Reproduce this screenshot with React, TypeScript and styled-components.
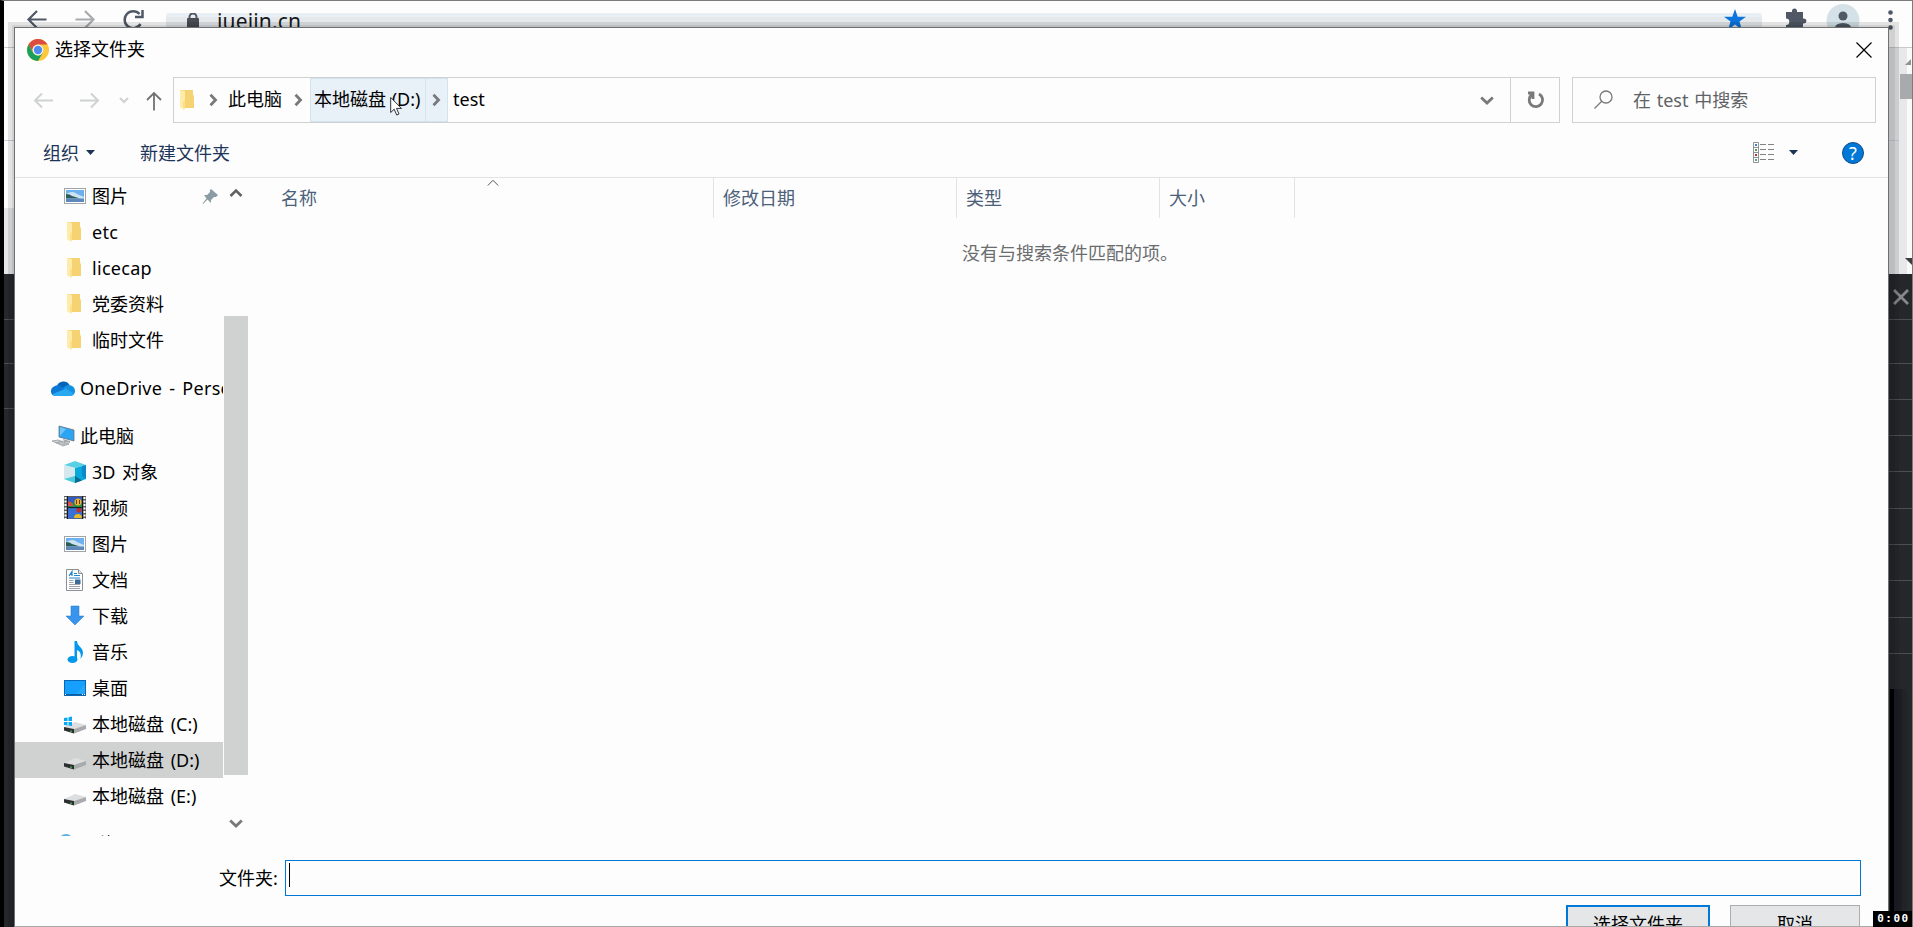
import React from 'react';
import styled, { createGlobalStyle, css } from 'styled-components';

const Global = createGlobalStyle`
  * { box-sizing: border-box; }
  html, body { margin: 0; padding: 0; overflow: hidden; background: #25272b; }
  body {
    font-family: "Noto Sans", "Noto Sans CJK SC", sans-serif; font-size: 18px; font-weight: 400;
    word-spacing: 1px; color: #000;
  }
  svg { flex: none; }
`;
const Screen = styled.div`
  position: relative; width: 1913px; height: 927px; overflow: hidden;
  border-top: 1px solid #7c7c7c; border-left: 4px solid #000; border-right: 1px solid #7c7c7c;
  display: flex; flex-direction: column;
`;
const BrowserBar = styled.div`
  height: 47px; flex: none; background: #fdfdfd; border-bottom: 1px solid #c8cacc;
  display: flex; align-items: flex-start; padding: 2px 0 0 20px;
`;
const NavIcon = styled.svg<{ $gap?: number }>`
  width: 26px; height: 32px; flex: none; margin-right: ${p => p.$gap ?? 22}px; overflow: visible;
`;
const UrlPill = styled.div`
  margin: 10px 0 0 -5px; width: 1596px; flex: none; height: 30px; border-radius: 3px 3px 0 0;
  background: linear-gradient(#e8f0f6 4px, #e6e9eb 4px);
  display: flex; align-items: flex-start; padding-left: 20px; color: #16181c;
`;
const Host = styled.span`margin-left: 17px; font-size: 21px; line-height: 16px; letter-spacing: .15px;`;
const BarEnd = styled.div`margin-left: -41px; display: flex;`;
const PageArea = styled.div`
  height: 226px; flex: none; background: #fdfdfd; display: flex; justify-content: space-between;
`;
const PageEdge = styled.div<{ $right?: boolean }>`
  width: ${p => (p.$right ? 24 : 10)}px; display: flex; flex-direction: column;
  background: ${p => (p.$right ? '#e4e6e8' : '#fdfdfd')};
`;
const PageBlock = styled.div<{ $h: number; $bg?: string; $line?: boolean }>`
  height: ${p => p.$h}px; flex: none; background: ${p => p.$bg ?? 'transparent'};
  border-bottom: ${p => (p.$line ? '1px solid #ccd2d8' : '0')};
`;
const PageScroll = styled.svg`position: absolute; right: 0; top: 47px; width: 13px; height: 226px;`;
const DevTools = styled.div`flex: 1; background: #25272b; display: flex; justify-content: space-between;`;
const Column = styled.div<{ $w: number }>`width: ${p => p.$w}px; display: flex; flex-direction: column;`;
const Row = styled.div<{ $h: number }>`
  height: ${p => p.$h}px; flex: none; border-bottom: 1px solid #4c4e50;
  display: flex; align-items: center; justify-content: center;
`;
const Console = styled.div`
  margin-top: 35px; flex: 1;
  background: linear-gradient(90deg, #25272b 1px, #000 1px 5px, #1c1c25 5px 13px, #222325 13px 18px, #25272b 18px);
`;

const Dialog = styled.section`
  position: absolute; left: 10px; top: 26px; width: 1875px; height: 900px; background: #fdfdfd;
  border: 1px solid #6e7072; border-bottom-color: #a8a8a8;
  box-shadow: 2px 2px 0 4px rgba(0,0,0,.08), 2px 3px 0 8px rgba(0,0,0,.1);
  display: flex; flex-direction: column; overflow: hidden;
`;
const TitleBar = styled.header`
  height: 49px; flex: none; display: flex; align-items: center; padding: 0 16px 6px 12px;
`;
const Title = styled.h1`margin: 0 auto 0 6px; padding-bottom: 2px; font-size: 18px; font-weight: inherit; line-height: 24px;`;
const NavRow = styled.div`height: 46px; flex: none; display: flex;`;
const Arrows = styled.svg`width: 158px; height: 46px; flex: none;`;
const Address = styled.div`
  width: 1387px; border: 1px solid #d0d2d2; display: flex; align-items: stretch; line-height: 40px;
`;
const FolderBox = styled.span`width: 32px; padding: 11px 0 0 3px; line-height: 0;`;
const Crumb = styled.span<{ $w: number; $hot?: boolean }>`
  width: ${p => p.$w}px; padding-left: ${p => (p.$hot ? 3 : 4)}px; white-space: nowrap; border: 1px solid transparent;
  ${p => p.$hot && css`background: #e8f0f8; border-color: #d4e4ec;`}
`;
const Chevron = styled.span<{ $w: number; $hot?: boolean }>`
  width: ${p => p.$w}px; display: flex; align-items: center; justify-content: center;
  border: 1px solid transparent; border-left: 0; padding-right: 2px;
  ${p => p.$hot && css`background: #e8f0f8; border-color: #d4e4ec;`}
`;
const DropButton = styled.span`
  margin-left: auto; width: 47px; display: flex; align-items: center; justify-content: center;
  border-right: 1px solid #d0d2d2;
`;
const Refresh = styled.span`width: 48px; display: flex; align-items: center; justify-content: center; padding-left: 1px;`;
const Search = styled.div`
  margin-left: 12px; width: 304px; border: 1px solid #d0d2d2; display: flex; align-items: center;
  padding: 0 0 2px 21px; gap: 20px; color: #606266;
`;
const ToolRow = styled.div`
  height: 55px; flex: none; border-bottom: 1px solid #e2e4e4; display: flex; align-items: center;
  padding: 4px 24px 0 28px; color: #1c3458;
`;
const Organize = styled.span`display: flex; align-items: center; gap: 7px;`;
const NewFolder = styled.span`margin-left: 45px; margin-right: auto;`;
const ViewMode = styled.span`display: flex; align-items: center; gap: 14px; margin-right: 44px; padding-top: 1px;`;
const Help = styled.span`
  width: 22px; height: 22px; margin-top: 1px; border-radius: 50%; background: #0078d8; border: 1px solid #0c4c8c;
  color: #fff; display: flex; align-items: center; justify-content: center; font-size: 18px; line-height: 20px;
`;
const Body = styled.div`height: 658px; flex: none; display: flex;`;
const Tree = styled.nav`width: 209px; overflow: hidden;`;
const TreeRow = styled.div<{ $root?: boolean; $selected?: boolean }>`
  height: 36px; width: 208px; display: flex; align-items: center; white-space: nowrap; overflow: hidden;
  padding-left: ${p => (p.$root ? 36 : 49)}px; gap: ${p => (p.$root ? 5 : 6)}px;
  margin: ${p => (p.$root ? '12px 0 0' : '0')};
  background: ${p => (p.$selected ? '#d0d2d2' : 'transparent')};
`;
const Label = styled.span<{ $latin: boolean }>`
  padding-bottom: ${p => (p.$latin ? 0 : 2)}px; letter-spacing: ${p => (p.$latin ? '.3px' : 'normal')};
  word-spacing: 2px;
`;
const Pin = styled.svg`margin-left: auto; margin-right: 4px; width: 17px; height: 17px;`;
const Scroll = styled.div`width: 24px; display: flex; flex-direction: column; align-items: center;`;
const Thumb = styled.div`width: 24px; height: 459px; flex: none; margin: 112px 0 41px; background: #d0d2d2;`;
const Files = styled.main`flex: 1; display: flex; flex-direction: column;`;
const Headings = styled.div`height: 40px; display: flex; margin-left: 24px; color: #4c607a;`;
const Heading = styled.div<{ $w: number }>`
  position: relative; width: ${p => p.$w}px; padding: 8px 0 0 9px; line-height: 24px; border-right: 1px solid #e2e4e4;
`;
const SortMark = styled.svg`position: absolute; left: 215px; top: 1px;`;
const Empty = styled.p`margin: 23px 0 0 714px; line-height: 24px; color: #6a6c6e;`;
const NameRow = styled.div`height: 36px; flex: none; margin-top: 24px; display: flex; align-items: center; padding-left: 204px;`;
const NameLabel = styled.span`padding-bottom: 2px;`;
const NameInput = styled.div`
  margin-left: auto; margin-right: 27px; width: 1576px; height: 36px; border: 1px solid #0078d4; padding: 2px 3px;
`;
const Caret = styled.i`display: block; width: 1px; height: 24px; background: #000;`;
const Actions = styled.div`display: flex; justify-content: flex-end; gap: 20px; margin: 9px 28px 0 0; flex: none;`;
const Action = styled.button<{ $primary?: boolean }>`
  height: 36px; width: ${p => (p.$primary ? 144 : 130)}px; padding: 0; background: #e4e6e8; font: inherit;
  border: ${p => (p.$primary ? '2px solid #0078d8' : '1px solid #acaeae')};
`;
const Timer = styled.div`
  position: absolute; right: -1px; bottom: 0; width: 40px; height: 16px; background: #000; color: #fff;
  font: bold 11px/15px "DejaVu Sans Mono", monospace; text-align: center; letter-spacing: 1.5px; padding-left: 1px;
`;
const Pointer = styled.svg`position: absolute; left: 386px; top: 95px; width: 13px; height: 21px;`;

const Chrome = () => (
  <svg width="22" height="22" viewBox="0 0 22 22">
    <circle cx="11" cy="11" r="11" fill="#fbc83c" />
    <path d="M1.5 5.5A11 11 0 0 1 20.5 5.5H11A5.5 5.5 0 0 0 6.2 13.8z" fill="#dc4c40" />
    <path d="M1.5 5.5A11 11 0 0 0 11 22L15.8 13.7A5.5 5.5 0 0 1 6.2 13.7z" fill="#18a05c" />
    <circle cx="11" cy="11" r="5.4" fill="#f4f4f4" /><circle cx="11" cy="11" r="4.2" fill="#4c8cf0" />
  </svg>
);
const Chev = ({ dir }: { dir: 'down' | 'right' }) => {
  const d = { down: 'M1.2 4.500L7 10L12.800 4.500', right: 'M4.500 1.800L9.500 7L4.500 12.200' }[dir];
  return <svg width="14" height="14" viewBox="0 0 14 14"><path d={d} fill="none" stroke="#77797b" strokeWidth="2.8" /></svg>;
};
const Down = () => <svg width="9" height="5" viewBox="0 0 9 5"><path d="M0 0H9L4.5 5z" fill="#1c3458" /></svg>;
const Folder = () => (
  <svg width="22" height="22" viewBox="0 0 22 22">
    <path d="M3 1H16V5L17 8V19H7L3 18z" fill="#f5d272" /><path d="M3 1L8 2V12L6 14L7 21L3 18z" fill="#ffecaa" />
    <path d="M6 13L8 11V19L7 21z" fill="#ffe088" />
  </svg>
);
const Picture = () => (
  <svg width="22" height="22" viewBox="0 0 22 22">
    <rect x=".5" y="3.5" width="21" height="15" fill="#fff" stroke="#a0a4a8" />
    <rect x="2" y="5" width="18" height="12" fill="#6cb0f0" /><path d="M2 9Q9 5 13 9L20 12V14H2z" fill="#cce4f2" />
    <path d="M2 9Q6 9 8 11L16 13.500H2z" fill="#2c5c58" /><path d="M2 13.500H20V17H2z" fill="#5c88bc" />
  </svg>
);
const Cloud = () => (
  <svg width="24" height="22" viewBox="0 0 24 22">
    <path d="M6 9A7 7 0 0 1 18.5 8L13 14z" fill="#0464b8" />
    <path d="M4 19A5 5 0 0 1 3 9.5Q7 7 10.5 9.5L20 15Z" fill="#0c78d4" />
    <path d="M18 8Q24 9 24 14Q24 18 20 19L12 11Q15 7.500 18 8z" fill="#1490e0" />
    <path d="M1.500 17Q6 15 15 11.500L23 17Q21.500 19 19 19H5Q3 19 1.500 17z" fill="#28a8f0" />
  </svg>
);
const Computer = () => (
  <svg width="24" height="22" viewBox="0 0 24 22">
    <path d="M8 1L23 5V16L8 12z" fill="#2ca4f4" stroke="#68747c" strokeWidth=".8" /><path d="M9 2L15 4L9 11z" fill="#6cc4f8" />
    <path d="M12 14L19 16V18L13 17z" fill="#a8acb0" /><path d="M1 16L7 15L18 19L12 21z" fill="#d4d8da" stroke="#8c9094" strokeWidth=".7" />
    <path d="M4 17L14 20M7 16L16 19.500M5 18L12 16" stroke="#9ca0a4" strokeWidth=".7" />
  </svg>
);
const Cube = () => (
  <svg width="22" height="22" viewBox="0 0 22 22">
    <path d="M0 4L11 0L22 4L11 7z" fill="#58d0e4" /><path d="M0 4L11 7V22L0 18z" fill="#d4e8ee" />
    <path d="M22 4L11 7V22L22 18z" fill="#08a8d8" /><path d="M22 4V18L18 15V5.200z" fill="#0c88cc" />
    <path d="M11 15L18 19.400L11 22z" fill="#086c94" /><path d="M0 18L11 15V22z" fill="#48ccdc" />
  </svg>
);
const Film = () => (
  <svg width="22" height="24" viewBox="0 0 22 24">
    <rect width="22" height="23" fill="#585a5c" /><rect x="3.500" y="1" width="15" height="10.500" fill="#345cc0" /><rect x="3.500" y="12" width="15" height="10.500" fill="#3870d4" />
    <path d="M3.500 9L8 6L12 9L18.500 8V11H3.500z" fill="#209048" /><path d="M4 5L8 7L10 10H4z" fill="#dc5048" />
    <circle cx="14" cy="6" r="3.500" fill="#e8b820" /><path d="M12.500 4V8M15.500 4V8" stroke="#7c3020" />
    <circle cx="15" cy="14" r="2.500" fill="#c03028" /><path d="M10 22A4 4 0 0 1 18 22z" fill="#e8b820" />
    <path d="M1.500 1V23M20.500 1V23" stroke="#fff" strokeWidth="2" strokeDasharray="2 1.500" /><path d="M3.500 0V23M18.500 0V23M3 11.600H19" stroke="#18191c" />
  </svg>
);
const Doc = () => (
  <svg width="22" height="22" viewBox="0 0 22 22">
    <path d="M2.500 .5H14.500L18.500 4.500V21.500H2.500z" fill="#fff" stroke="#8c9094" /><path d="M14.500 .5V4.500H18.500" fill="#e4e6e8" stroke="#8c9094" />
    <path d="M5 7L8 2.500V7M6 5.500H8M10 4.500H13M10 6.500H16M5 9H16" stroke="#2484cc" fill="none" strokeWidth="1.200" />
    <path d="M5 11.500H9.500M5 13.500H9.500M5 15.500H16M5 17.500H16M5 19.500H16" stroke="#a0a4a8" /><rect x="11" y="10.500" width="5.500" height="4.500" fill="#3c6c98" />
  </svg>
);
const Download = () => <svg width="22" height="22" viewBox="0 0 22 22"><path d="M7 1H15V11H20L11 20L2 11H7z" fill="#3894ec" stroke="#2474cc" strokeWidth=".5" /></svg>;
const Music = () => (
  <svg width="22" height="24" viewBox="0 0 22 24">
    <ellipse cx="8.500" cy="19.500" rx="5" ry="3.500" fill="#0498ec" /><path d="M10.500 1H13C13 6 19 7 19 13Q19 16 16.500 19Q18 12 13 10V19.500H10.500z" fill="#0498ec" />
  </svg>
);
const Desktop = () => (
  <svg width="22" height="22" viewBox="0 0 22 22">
    <rect x=".5" y="3.500" width="21" height="15" fill="#14a0fc" stroke="#0868b4" /><path d="M12 17L21 8V17z" fill="#28a8fc" />
    <path d="M1 17.500H21" stroke="#0c5ca4" /><path d="M1 17.500H2M18 17.500H21" stroke="#fff" strokeDasharray="1 1" />
  </svg>
);
const Disk = ({ win }: { win?: boolean }) => (
  <svg width="22" height="22" viewBox="0 0 22 22">
    <path d="M0 14L11 9L22 12L10 16z" fill="#dcdee0" /><path d="M0 14L10 16V20.500L0 17.500z" fill="#2c2e30" />
    <path d="M10 16L22 12V16L10 20.500z" fill="#a8aaac" /><path d="M7 17.500V19" stroke="#30c840" strokeWidth="1.500" />
    {win && <path d="M0 5L3.500 4.400V8H0zM4.500 4.200L8 3.500V8H4.500zM0 9H3.500V12.500L0 12zM4.500 9H8V13L4.500 12.600z" fill="#08a8f4" />}
  </svg>
);
const Globe = () => (
  <svg width="24" height="22" viewBox="0 0 24 22"><circle cx="15" cy="8.500" r="7.500" fill="#58b0e0" /><path d="M10 5Q15 1 16 5L13 9z" fill="#a8d4ec" /></svg>
);

type Item = { label: string; icon: React.ReactNode; root?: boolean; selected?: boolean; pinned?: boolean };
const items: Item[] = [
  { label: '图片', icon: <Picture />, pinned: true },
  { label: 'etc', icon: <Folder /> },
  { label: 'licecap', icon: <Folder /> },
  { label: '党委资料', icon: <Folder /> },
  { label: '临时文件', icon: <Folder /> },
  { label: 'OneDrive - Personal', icon: <Cloud />, root: true },
  { label: '此电脑', icon: <Computer />, root: true },
  { label: '3D 对象', icon: <Cube /> },
  { label: '视频', icon: <Film /> },
  { label: '图片', icon: <Picture /> },
  { label: '文档', icon: <Doc /> },
  { label: '下载', icon: <Download /> },
  { label: '音乐', icon: <Music /> },
  { label: '桌面', icon: <Desktop /> },
  { label: '本地磁盘 (C:)', icon: <Disk win /> },
  { label: '本地磁盘 (D:)', icon: <Disk />, selected: true },
  { label: '本地磁盘 (E:)', icon: <Disk /> },
  { label: '网络', icon: <Globe />, root: true },
];
const isLatin = (s: string) => /^[ -~]+$/.test(s);

const Browser = () => (
  <>
    <BrowserBar>
      <NavIcon viewBox="0 0 26 32"><path d="M22.500 16.500H4.500M13 8L4.500 16.500L13 25" fill="none" stroke="#505866" strokeWidth="2.200" /></NavIcon>
      <NavIcon viewBox="0 0 26 32"><path d="M3.500 16.500H21.500M13 8L21.500 16.500L13 25" fill="none" stroke="#a8aaac" strokeWidth="2.200" /></NavIcon>
      <NavIcon viewBox="0 0 26 32" $gap={25}><path d="M19.500 11A8.500 8.500 0 1 0 20.500 21M22.500 7V14H15" fill="none" stroke="#505866" strokeWidth="2.500" /></NavIcon>
      <UrlPill>
        <svg width="14" height="16" viewBox="0 0 14 16"><path d="M3.500 6V4A3.500 3.500 0 0 1 10.500 4V6" fill="none" stroke="#505866" strokeWidth="2" /><rect x="1" y="5" width="12" height="13" rx="1" fill="#484c54" /></svg>
        <Host>juejin.cn</Host>
      </UrlPill>
      <BarEnd>
        <NavIcon viewBox="0 0 26 32" $gap={34}><path d="M14 6L16.700 13.700H25L18.500 18.500L21 27L14 21.500L7 27L9.500 18.500L3 13.700H11.300z" fill="#0c74dc" /></NavIcon>
        <NavIcon viewBox="0 0 26 32" $gap={21}><path d="M5 9H11V8A2.500 2.500 0 0 1 16 8V9H22V15.500H23A2.500 2.500 0 0 1 23 20.500H22V28H5V22A3 3 0 0 0 5 15.500z" fill="#505866" /></NavIcon>
        <NavIcon viewBox="0 0 26 32" $gap={22}><circle cx="15" cy="17.500" r="16.500" fill="#d4e2e8" /><circle cx="15" cy="13" r="4.500" fill="#505866" /><path d="M6.500 26Q7 20 15 20T23.500 26z" fill="#505866" /></NavIcon>
        <NavIcon viewBox="0 0 26 32"><g fill="#505866"><circle cx="14.500" cy="9.500" r="2.300" /><circle cx="14.500" cy="17" r="2.300" /><circle cx="14.500" cy="24.500" r="2.300" /></g></NavIcon>
      </BarEnd>
    </BrowserBar>
    <PageArea>
      <PageEdge><PageBlock $h={93} $line /><PageBlock $h={67} /><PageBlock $h={66} $bg="#e4e6e8" /></PageEdge>
      <PageEdge $right><PageBlock $h={93} $line /></PageEdge>
    </PageArea>
    <PageScroll viewBox="0 0 13 226">
      <rect width="13" height="226" fill="#e6e8ea" /><path d="M8 0H13V226H8z" fill="#fafafa" /><path d="M6 17L12 11V17z" fill="#909294" />
      <rect x="1" y="26" width="12" height="25" fill="#a8aaac" /><path d="M6 210H13V217z" fill="#3c3e40" />
    </PageScroll>
    <DevTools>
      <Column $w={10}>{[46, 44, 45].map((h, i) => <Row key={i} $h={h} />)}</Column>
      <Column $w={23}>
        {[46, 44, 36, 36, 36, 37, 36, 36, 37, 36].map((h, i) => (
          <Row key={i} $h={h}>{i === 0 && <svg width="16" height="16" viewBox="0 0 16 16"><path d="M1 1L15 15M15 1L1 15" stroke="#86888a" strokeWidth="2.800" /></svg>}</Row>
        ))}
        <Console />
      </Column>
    </DevTools>
  </>
);

export default function App() {
  return (
    <>
      <Global />
      <Screen>
        <Browser />
        <Dialog>
          <TitleBar>
            <Chrome /><Title>选择文件夹</Title>
            <svg width="16" height="16" viewBox="0 0 16 16"><path d="M.5 .5L15.500 15.500M15.500 .5L.5 15.500" stroke="#000" strokeWidth="1.200" /></svg>
          </TitleBar>
          <NavRow>
            <Arrows viewBox="0 0 158 46">
              <g fill="none" stroke="#d0d2d2" strokeWidth="2"><path d="M38 23.500H20M27 16.500L20 23.500L27 30.500M65 23.500H83M76 16.500L83 23.500L76 30.500M105 21L109 25L113 21" /></g>
              <path d="M139 33.500V16M132 23L139 16L146 23" fill="none" stroke="#707274" strokeWidth="1.800" />
            </Arrows>
            <Address>
              <FolderBox><Folder /></FolderBox>
              <Chevron $w={17}><Chev dir="right" /></Chevron>
              <Crumb $w={65}>此电脑</Crumb><Chevron $w={22}><Chev dir="right" /></Chevron>
              <Crumb $w={116} $hot>本地磁盘 (D:)</Crumb><Chevron $w={22} $hot><Chev dir="right" /></Chevron>
              <Crumb $w={60}>test</Crumb>
              <DropButton><Chev dir="down" /></DropButton>
              <Refresh><svg width="18" height="18" viewBox="0 0 18 18"><path d="M12 3A6.700 6.700 0 1 1 5 3.500M1 2H6V8" fill="none" stroke="#77797b" strokeWidth="2.800" /></svg></Refresh>
            </Address>
            <Search>
              <svg width="19" height="19" viewBox="0 0 19 19"><circle cx="12" cy="7" r="6" fill="none" stroke="#77797b" strokeWidth="1.300" /><path d="M8 11L.5 18.500" stroke="#77797b" strokeWidth="1.300" /></svg>
              <span>在 test 中搜索</span>
            </Search>
          </NavRow>
          <ToolRow>
            <Organize>组织<Down /></Organize>
            <NewFolder>新建文件夹</NewFolder>
            <ViewMode>
              <svg width="22" height="22" viewBox="0 0 22 22">
                <path d="M.5 .5H5.500V20.500H.5zM.5 5.500H5.500M.5 10.500H5.500M.5 15.500H5.500" fill="#fff" stroke="#909496" />
                <path d="M7 2.500H13M15 2.500H21M7 7.500H13M15 7.500H21M7 12.500H13M15 12.500H21M7 17.500H13M15 17.500H21" stroke="#808284" />
                <path d="M2 2H4V4H2z" fill="#3c80c0" /><path d="M2 7H4V9H2z" fill="#60985c" /><path d="M2 12H4V14H2z" fill="#c03028" /><path d="M2 17H4V19H2z" fill="#60a080" />
              </svg>
              <Down />
            </ViewMode>
            <Help>?</Help>
          </ToolRow>
          <Body>
            <Tree>
              {items.map((it, i) => (
                <TreeRow key={i} $root={it.root} $selected={it.selected}>
                  {it.icon}<Label $latin={isLatin(it.label)}>{it.label}</Label>
                  {it.pinned && <Pin viewBox="0 0 17 17"><path d="M9 1L16 7L14 9H12L9 12V15L5.500 11.500L1 16L.5 15.500L4.500 10.500L2 7H5L8 4V2z" fill="#8c9ca4" /></Pin>}
                </TreeRow>
              ))}
            </Tree>
            <Scroll>
              <svg width="14" height="26" viewBox="0 0 14 26"><path d="M1.500 18L7 12.500L12.500 18" fill="none" stroke="#606264" strokeWidth="2.600" /></svg>
              <Thumb /><Chev dir="down" />
            </Scroll>
            <Files>
              <Headings>
                <Heading $w={442}>名称<SortMark width="12" height="8" viewBox="0 0 12 8"><path d="M.8 6.500L6 1.300L11.200 6.500" fill="none" stroke="#505254" /></SortMark></Heading>
                <Heading $w={243}>修改日期</Heading><Heading $w={203}>类型</Heading><Heading $w={135}>大小</Heading>
              </Headings>
              <Empty>没有与搜索条件匹配的项。</Empty>
            </Files>
          </Body>
          <NameRow><NameLabel>文件夹:</NameLabel><NameInput><Caret /></NameInput></NameRow>
          <Actions><Action $primary>选择文件夹</Action><Action>取消</Action></Actions>
        </Dialog>
        <Pointer viewBox="0 0 13 21"><path d="M.7 1.500V16.500L4.200 13.200L6.700 19L9 18L6.500 12.400H11.500z" fill="#fff" stroke="#303234" /></Pointer>
        <Timer>0:00</Timer>
      </Screen>
    </>
  );
}
